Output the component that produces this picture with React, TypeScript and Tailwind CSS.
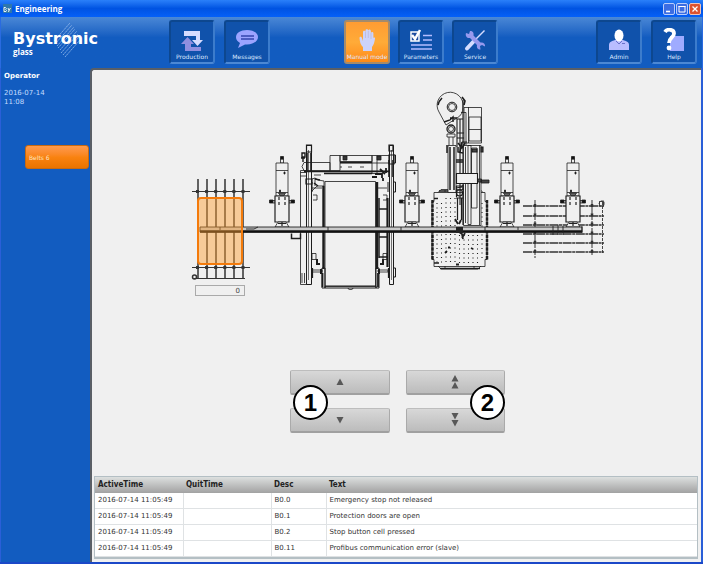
import type { ReactNode } from "react";

type Alarm = {
  active: string;
  quit: string;
  desc: string;
  text: string;
};

const alarms: Alarm[] = [
  { active: "2016-07-14 11:05:49", quit: "", desc: "B0.0", text: "Emergency stop not released" },
  { active: "2016-07-14 11:05:49", quit: "", desc: "B0.1", text: "Protection doors are open" },
  { active: "2016-07-14 11:05:49", quit: "", desc: "B0.2", text: "Stop button cell pressed" },
  { active: "2016-07-14 11:05:49", quit: "", desc: "B0.11", text: "Profibus communication error (slave)" },
];

const headX = [282, 412, 507, 573];
const leftRackX = [198, 207, 216, 225, 234, 243];
const rightRackY = [206, 216, 225, 234, 243, 252];

function ProductionIcon() {
  return (
    <svg viewBox="0 0 24 24" className="h-6 w-6">
      <path d="M4 3h16v9h3l-5.500 6-5.500-6h4V8H4z" fill="#d5dcff" />
      <path d="M21 23H5v-7H1l6.500-7L14 16h-3v3h10z" fill="#8f8fe0" />
    </svg>
  );
}

function MessagesIcon() {
  return (
    <svg viewBox="0 0 24 24" className="h-6 w-6">
      <path d="M12 2c6.500 0 11 3 11 7s-4.500 7.500-11 7.500h-2L3 20l2-5C2.500 13.500 1 11.500 1 9.200 1 5 5.500 2 12 2z" fill="#9ba3ff" />
      <path d="M6 8h13M6 11h13" stroke="#3546ae" strokeWidth="1.300" />
    </svg>
  );
}

function HandIcon() {
  return (
    <svg viewBox="0 0 24 24" className="h-6 w-6">
      <path
        d="M8 23v-4c-2-2-3-4-3.500-9 0-1.500 2-1.800 2.400 0l1.100 3V4c0-1.700 2.300-1.700 2.500 0V2.500c0-1.800 2.600-1.800 2.800 0V2.500c.3-1.600 2.600-1.300 2.600.7V5c.5-1.500 2.500-1.200 2.500.5V10c1-1 1.800-.4 1.600.8-.6 3.500-1.200 6.200-3 8.200v4z"
        fill="#ccd3fb"
      />
      <path d="M10.500 4v6M13.300 3v7M16 5v6" stroke="#b0a8c8" strokeWidth="0.500" />
    </svg>
  );
}

function ParametersIcon() {
  return (
    <svg viewBox="0 0 24 24" className="h-6 w-6">
      <path d="M2 4h8v9H2z" fill="#1c4ca0" stroke="#fff" strokeWidth="1.500" />
      <path d="M3 7l3 4 5-9" fill="none" stroke="#fff" strokeWidth="2.500" />
      <path d="M14 7.500h9M14 12h9M2 17h21M2 21h21" stroke="#b3bdff" strokeWidth="1.700" />
    </svg>
  );
}

function ServiceIcon() {
  return (
    <svg viewBox="0 0 24 24" className="h-6 w-6">
      <path d="M21.500 2.500L12 12" stroke="#d5dcff" strokeWidth="1.500" />
      <path d="M11 13l-7 7.500" stroke="#d5dcff" strokeWidth="4" strokeLinecap="round" />
      <path
        d="M3 5l3 1 1-3c3 0 4 2 3.500 4.500l7 7c3-.5 5 1.500 4.500 4l-3-1.500-2 1 .5 3.500c-3 0-4-2-3.500-4.500l-7-7C4 10.500 2 8 3 5z"
        fill="#9699ee"
      />
    </svg>
  );
}

function AdminIcon() {
  return (
    <svg viewBox="0 0 24 24" className="h-6 w-6">
      <path d="M2 22v-5c0-3 3-4 6-5h8c3 1 6 2 6 5v5z" fill="#b9bdff" />
      <path d="M9 13l3 3 3-3M15 15.500h3" fill="none" stroke="#6c72ca" />
      <ellipse cx="12" cy="7.500" rx="4.500" ry="6" fill="#fff" />
    </svg>
  );
}

function HelpIcon() {
  return (
    <svg viewBox="0 0 24 24" className="h-6 w-6">
      <path d="M8 8h14v15H8z" fill="#9fabff" />
      <path d="M3 4c2-3.500 9-3 9 1.500 0 4-5 4-5 9.500" fill="none" stroke="#fff" strokeWidth="3.800" />
      <circle cx="7" cy="20" r="2.400" fill="#fff" />
    </svg>
  );
}

type NavButtonProps = {
  label: string;
  icon: ReactNode;
  active?: boolean;
};

function NavButton({ label, icon, active }: NavButtonProps) {
  const tone = active
    ? "border-[#a58b6b] bg-linear-to-b from-[#ff9c33] via-[#ffab38] to-[#ff8a14]"
    : "border-[#0d478f] bg-[#1052ab] border-b-[#4c88d4] border-r-[#3c7ccc]";
  return (
    <button
      type="button"
      className={`flex h-[44px] w-[46px] flex-col items-center justify-end gap-px rounded-[3px] border-2 pb-px ${tone}`}
    >
      {icon}
      <span className="text-[6px] leading-[8px] whitespace-nowrap text-[#dce8ff]">{label}</span>
    </button>
  );
}

function Logo() {
  return (
    <div className="relative w-[168px] shrink-0 pt-[13px] pl-[12px] text-white">
      <svg viewBox="0 0 28 36" className="absolute top-[5px] left-[52px] h-9 w-7" stroke="#a9c8f2" strokeWidth="0.700">
        <path
          d="M1 19L17 1M2 22L19 3M4 24L21 5M5 26L22 7M7 28L24 9M8 31L25 12M10 33L26 15M12 35L27 18"
          strokeDasharray="1.800 0.500"
        />
      </svg>
      <div className="relative text-[16px] leading-[18px] font-bold">Bystronic</div>
      <div className="relative font-['Open_Sans',sans-serif] text-[8px] leading-[7px] font-bold">glass</div>
    </div>
  );
}

function TitleBar() {
  return (
    <div className="flex h-[17px] items-center bg-linear-to-b from-[#2a80fa] via-[#0053e2] to-[#0560f8] pr-[2px] pl-[3px]">
      <svg viewBox="0 0 9 9" className="h-[9px] w-[9px]">
        <rect width="9" height="9" fill="#2e77ad" />
        <path d="M1 3.500v4h2l.5-1-.8-1 .6-1-.8-1zM5 4l1 2.500L7.500 4M6 6.500L5.500 8" fill="none" stroke="#fff" strokeWidth="0.900" />
      </svg>
      <span className="ml-[3px] font-['Open_Sans',sans-serif] text-[8px] leading-[10px] font-bold text-white">
        Engineering
      </span>
      <div className="ml-auto flex gap-px">
        <button type="button" aria-label="Minimize" className="h-[12px] w-[12px] rounded-[2px] border border-[#b9ccfa] bg-[#3b6de3]">
          <svg viewBox="0 0 10 10" className="block"><path d="M2 7.500h4" stroke="#fff" strokeWidth="1.600" /></svg>
        </button>
        <button type="button" aria-label="Maximize" className="h-[12px] w-[12px] rounded-[2px] border border-[#b9ccfa] bg-[#3b6de3]">
          <svg viewBox="0 0 10 10" className="block"><path d="M2 2v6h6V2M1.500 2.500h7" fill="none" stroke="#fff" /></svg>
        </button>
        <button type="button" aria-label="Close" className="h-[12px] w-[12px] rounded-[2px] border border-[#f0c4b8] bg-[#dd5330]">
          <svg viewBox="0 0 10 10" className="block"><path d="M2.500 2.500l5 5M7.500 2.500l-5 5" stroke="#fff" strokeWidth="1.300" /></svg>
        </button>
      </div>
    </div>
  );
}

// Gripper head, drawn around x = 0
function Head({ x }: { x: number }) {
  return (
    <g transform={`translate(${x} 0)`} fill="#f0f0f0" stroke="#222" strokeWidth="0.800">
      <path d="M-1.500 159h3v4h-3z" />
      <path d="M-1.500 156.500h3v2.500h-3zM-12.500 200h3.500v3h-3.500zM9 200h3.500v3H9z" fill="#111" />
      <path d="M-9 200.500h2v2.500h-2zM7 200.500h2v2.500H7z" />
      <path d="M-6 163H6v33H-6zM-6 170.500H6M-6 192.500H6" />
      <path d="M-3.500 193h7l-2 3h-3z" fill="#666" />
      <path d="M2 172h1v2H2zM-2.500 190h1v2h-1z" fill="#111" />
      <path d="M-7 196H7v26H-7z" strokeWidth="1.200" />
      <path d="M-3 197v3M3 197v3M-3 202v3M3 202v3" strokeWidth="1.200" />
      <path d="M-4 222h8l3 5H-7z" />
      <path d="M-4 223.500h8M0 222v4" strokeWidth="1.200" />
    </g>
  );
}

function PressFrame() {
  return (
    <g fill="none" stroke="#1c1c1c" strokeWidth="0.800">
      <path d="M300.500 170.500h6v114h-6zM300.500 172.500h6M300.500 176h6M302 273v10M304.500 273v10" />
      <path d="M306.500 145.500h5v139h-5zM389.500 145.500h4v139h-4z" strokeWidth="1" />
      <path d="M308.500 150v130M391.500 150v130" strokeWidth="0.600" />
      <path d="M306.500 145h5v7h-5zM306 179h6v5h-6zM389 145h4v6h-4zM389 155h5v9h-5z" strokeWidth="1.200" />
      <path d="M307 153v18M311 153v18M389 160v17M393 160v17" strokeWidth="1.600" />
      <path d="M302 153h3v4h-3zM303 157v5M301 158h4" strokeWidth="1.400" />
      <path d="M304 162.500h26v8h-26l-2-4zM330 155.500h10v15h-10zM340 155.500h32v6h-32zM372 155.500h5v18h-5zM340 163h49M340 171h49M377 155.500h12" />
      <path d="M343 156h4v4h-4zM377 156h4v4h-4z" fill="#333" />
      <path d="M340 162.500h32M304 171.500h85M324 173.500h48" strokeWidth="1.600" />
      <path d="M340 167h2M348 167h4M360 167h4M314 175h7" />
      <path d="M372 177h5M375 174h7v4M380 169l5 5M386 168v5M383 178v3" strokeWidth="1.800" />
      <path d="M325 181.500h50.500v105H325z" fill="#f0f0f0" />
      <path d="M323.500 186v83M377 182v87" strokeWidth="2.400" />
      <path d="M322 268h3v20h-3zM376 268h3v20h-3zM325 286h51v2h-51zM348 288c0 2 5 2 5 0" strokeWidth="1" />
      <path d="M322.500 273v14M378 273v14" strokeWidth="1.800" />
      <path d="M312 179l3-1 3 2 6 1v5h-7l-5 5M315 178v8M313 195h4v5h-4M312 188h10M378 188h9M383 195h4v5h-4" />
      <path d="M315 179l5 1M314 183l4 3" strokeWidth="1.500" />
      <path d="M379 198v60" strokeWidth="1.500" />
      <path d="M387.500 198v69" strokeWidth="2.200" />
      <path d="M379 209h8M379 237h8M379 257h8" strokeWidth="1.500" />
      <path d="M312 253.500h4v6h-4zM383 253.500h4v6h-4zM312 270h10v2h-10zM378 270h10v2h-10z" />
      <path d="M317 259v5h3M383 259v5h-3M321 269v5M379 269v5" strokeWidth="2" />
      <path d="M312.500 268v10M388.500 268v10" strokeWidth="1.200" />
      <path d="M394 155h1.500v8H394M394 182h1.500v10H394M394 268h1.500v9H394M312 182v10M388 182v10" strokeWidth="1" />
      <path d="M291.500 233.500v5h9v-5" strokeWidth="1.500" />
    </g>
  );
}

function Processing() {
  return (
    <g fill="none" stroke="#1c1c1c" strokeWidth="0.800">
      <path d="M434 192.500h51v9h2v58h-2v7h-51v-7h-2v-58h2z" fill="#f0f0f0" />
      <path d="M438 192.500l3-3h39l3 3M438 266l3 3h37l3-3M445 190v2M474 190v2M445 266v3M474 266v3" />
      <path
        d="M437 203v61M441.500 203v61M446 198v66M450.500 198v66M455 198v66M459.500 235v29M464 235v29M468.500 235v29M473 235v29M477.500 235v29M482 203v58"
        strokeWidth="1.100"
        strokeDasharray="1.100 3.400"
      />
      <path d="M432.500 200v60M487 200v60" strokeWidth="2.500" strokeDasharray="3.500 0.800" />
      <path d="M434 198.500h4M434 263h5M440 268.500h40M439 191h12" strokeWidth="1.600" />
      <path d="M448 247.500h2M445 253l2-2M471 248l2 1M456 264.500h3" strokeWidth="1.800" />

      <path d="M439 112a13 13 0 1 1 24-5c0 5-2 9-6 11l-11 7-7-13z" fill="#f0f0f0" />
      <path d="M438 105a14 14 0 0 1 4-7M462 97l3 4-1 4" strokeWidth="1.600" />
      <circle cx="452" cy="107" r="4.800" strokeWidth="1" />
      <circle cx="452" cy="107" r="3.500" />
      <path d="M444 122l6-2 3-3v5M450 118h7" strokeWidth="1.400" />
      <circle cx="451" cy="129" r="4" strokeWidth="1.300" />
      <circle cx="451" cy="129" r="2.500" />
      <path d="M447 134h8v3h-8zM449 137v8M453 137v8" />
      <path d="M457 119v28M460 119v86M463 100v90" strokeWidth="1.100" />
      <path d="M461 112.500h5V145M464 107.500h17.500V143H464zM468.500 107v36M469 117h12v24h-12zM469 129.500h12" />
      <path d="M457 119h6M457 133h7M457 138h7M462 142h5" strokeWidth="1.200" />
      <path d="M448 145.500h8v47h-8z" fill="#f0f0f0" />
      <path d="M450 147v43M454 147v43M447 145v8" strokeWidth="1.500" />
      <path d="M463.500 145.500h17.500v80h-17.500z" fill="#f0f0f0" />
      <path d="M465.500 147v76M468 145.500h3v79h-3zM471.500 148h5.500v60h-5.500zM479.500 145v80" />
      <path d="M472 149h5v3h-5zM481 147h2v5h-2z" fill="#444" strokeWidth="1.100" />
      <path d="M458 143l4 5 3-5M458 147v5l5 1M462 142l-2 10M456 160h7M456 162h7" strokeWidth="1.500" />
      <path d="M456.500 173.500h21v10h-21z" fill="#f0f0f0" strokeWidth="1.100" />
      <path d="M477.500 179h4v3h-4zM481 180h8v3h-8z" fill="#444" />
      <circle cx="459.500" cy="193" r="3" strokeWidth="1.200" />
      <path d="M456 186h7M456 188l6-1M456 198h7M456.500 186v11M463 185v40M457.500 198v22M461.500 198v22" strokeWidth="1.200" />
      <path d="M455 219l3 5M461 220l-2 4" strokeWidth="1.800" />
    </g>
  );
}

function MachineDrawing() {
  return (
    <svg viewBox="186 88 421 206" className="block h-[206px] w-full" role="img" aria-label="Machine line">
      <g stroke="#333" fill="none">
        {leftRackX.map((x) => (
          <path key={x} d={`M${x} 179V279`} strokeWidth="1.500" />
        ))}
        <path d="M192 191.500h58M192 267.500h58M194 278.500h51" strokeWidth="1.100" />
        <path d="M196 191.500h49M196 267.500h49" strokeWidth="3" strokeDasharray="3 6.100" />
        <circle cx="194.500" cy="277" r="2" strokeWidth="1.500" />
      </g>

      <g stroke="#333" fill="none">
        {rightRackY.map((y) => (
          <path key={y} d={`M523 ${y}H604`} strokeWidth="1.400" strokeDasharray="9 0.600 3 0.600" />
        ))}
        <path d="M535 200v58M592 200v56" strokeWidth="1" strokeDasharray="6 1" />
        <path d="M535 204v50M592 204v50" strokeWidth="2.500" strokeDasharray="3 6.200" />
        <path d="M602.500 202v51M599 204l1-3h4v5" strokeWidth="0.900" strokeDasharray="3 1" />
        <path d="M599.500 201.500h4v4.500h-4z" strokeWidth="0.900" />
      </g>

      <PressFrame />
      <Processing />
      {headX.map((x) => (
        <Head key={x} x={x} />
      ))}

      <path d="M200 227H582V232H200z" fill="#c9c9c9" stroke="#222" strokeWidth="0.900" />
      <path d="M200 231.500H582" stroke="#111" strokeWidth="2.600" />
      <path d="M220 227v3M246 229h8l4-2M328 227v4M401 227v4M485 227v4M518 227v3M553 226v9M558 225v10M563 226v9M582 226v7" stroke="#222" fill="none" strokeWidth="0.900" />
      <path d="M456 227h7v6h-7z" fill="#222" />
      <path d="M459 232l3 2 1 5M465 233l-3 5" stroke="#222" strokeWidth="1.800" fill="none" />

      <rect x="198" y="198" width="44" height="66" rx="3" fill="#ff9d2e" fillOpacity="0.450" stroke="#f47a0a" strokeWidth="2" />
    </svg>
  );
}

function MoveButton({ label, path }: { label: string; path: string }) {
  return (
    <button
      type="button"
      aria-label={label}
      className="flex h-[25px] items-center justify-center rounded-[2px] border border-[#aaa] border-t-[#bdbdbd] border-b-2 border-b-[#a0a0a0] bg-linear-to-b from-[#d8d8d8] to-[#bcbcbc]"
    >
      <svg viewBox="0 0 10 14" className="h-[14px] w-[10px]">
        <path d={path} fill="#585858" />
      </svg>
    </button>
  );
}

function Callout({ children }: { children: ReactNode }) {
  return (
    <span className="flex h-[35px] w-[35px] items-center justify-center rounded-full border-2 border-black bg-white font-['Liberation_Sans',Arial,sans-serif] text-[24px] leading-[24px] font-bold text-black">
      {children}
    </span>
  );
}

function AlarmTable() {
  return (
    <div className="mt-auto mr-[3px] mb-[3px] ml-[2px] border border-[#b4bfc4] border-b-2 bg-white">
      <table className="w-full table-fixed border-collapse text-left text-[7px] leading-[9px] text-[#333]">
        <colgroup>
          <col className="w-[88px]" />
          <col className="w-[88px]" />
          <col className="w-[55px]" />
          <col />
        </colgroup>
        <thead>
          <tr className="h-[16px] bg-linear-to-b from-[#dde0df] to-[#a2a2a2] font-['DejaVu_Sans_Condensed','DejaVu_Sans',sans-serif] text-[8px] text-[#222]">
            <th className="px-[3px]">ActiveTime</th>
            <th className="px-[3px]">QuitTime</th>
            <th className="px-[3px]">Desc</th>
            <th className="px-[3px]">Text</th>
          </tr>
        </thead>
        <tbody>
          {alarms.map((alarm) => (
            <tr key={alarm.desc} className="h-[16px] border-b border-[#dfe2e4]">
              <td className="border-r border-[#dfe2e4] px-[3px]">{alarm.active}</td>
              <td className="border-r border-[#dfe2e4] px-[3px]">{alarm.quit}</td>
              <td className="border-r border-[#dfe2e4] px-[3px]">{alarm.desc}</td>
              <td className="px-[3px]">{alarm.text}</td>
            </tr>
          ))}
        </tbody>
      </table>
    </div>
  );
}

export default function App() {
  return (
    <div className="flex min-h-screen flex-col border-b-2 border-[#1b48c8] bg-[#125cc0] font-['DejaVu_Sans',Verdana,sans-serif]">
      <TitleBar />

      <header className="flex h-[51px] border-x border-[#2a6be0] bg-linear-to-b from-[#4a88d6] to-[#125cc0] to-40% pr-[5px]">
        <Logo />
        <nav className="flex flex-1 items-start pt-[3px]">
          <div className="flex gap-[9px]">
            <NavButton label="Production" icon={<ProductionIcon />} />
            <NavButton label="Messages" icon={<MessagesIcon />} />
          </div>
          <div className="ml-[74px] flex gap-[8px]">
            <NavButton label="Manual mode" icon={<HandIcon />} active />
            <NavButton label="Parameters" icon={<ParametersIcon />} />
            <NavButton label="Service" icon={<ServiceIcon />} />
          </div>
          <div className="ml-auto flex gap-[9px]">
            <NavButton label="Admin" icon={<AdminIcon />} />
            <NavButton label="Help" icon={<HelpIcon />} />
          </div>
        </nav>
      </header>

      <div className="flex flex-1 border-r-2 border-l border-[#2a5fd8]">
        <aside className="w-[89px] shrink-0 text-[7px] leading-[9px] text-[#c3dcff]">
          <div className="px-[3px] pt-[4px]">
            <p className="font-bold text-white">Operator</p>
            <p className="mt-[8px]">2016-07-14</p>
            <p>11:08</p>
          </div>
          <button
            type="button"
            className="mt-[38px] ml-[24px] block h-[24px] w-[64px] rounded-[3px] border border-[#c86a10] bg-linear-to-b from-[#ff9a4a] via-[#f98310] to-[#ea7300] pl-[3px] text-left text-[6px] text-[#ffe6c4]"
          >
            Belts 6
          </button>
        </aside>

        <main className="flex flex-1 flex-col rounded-tl-[4px] border-t-2 border-l-2 border-[#5a5f66] bg-[#f0f0f0]">
          <div className="relative mx-auto mt-[18px] w-[421px]">
            <MachineDrawing />
            <input
              type="text"
              aria-label="Belt position"
              defaultValue="0"
              className="absolute top-[197px] left-[9px] h-[11px] w-[50px] border border-[#aaa] bg-[#f0f0f0] pr-[4px] text-right text-[7px] leading-[9px] text-[#444]"
            />
          </div>

          <div className="relative mx-auto mt-[76px] grid w-[217px] grid-cols-2 gap-x-[16px] gap-y-[13px] pl-[2px]">
            <MoveButton label="Slow up" path="M5 3.500L8.500 10h-7z" />
            <MoveButton label="Fast up" path="M5 0L8.500 6.500h-7zM5 7l3.500 6.500h-7z" />
            <MoveButton label="Slow down" path="M5 10.500L8.500 4h-7z" />
            <MoveButton label="Fast down" path="M5 6.500L8.500 0h-7zM5 13.500L8.500 7h-7z" />
            <div className="absolute top-[15px] left-[5px]">
              <Callout>1</Callout>
            </div>
            <div className="absolute top-[15px] right-[0px]">
              <Callout>2</Callout>
            </div>
          </div>

          <AlarmTable />
        </main>
      </div>
    </div>
  );
}
